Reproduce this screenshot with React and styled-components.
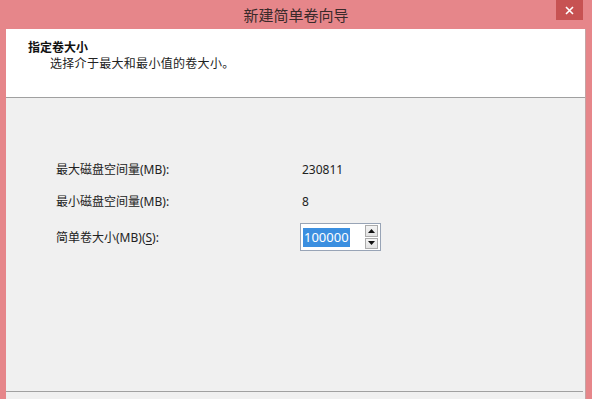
import React from "react";
import styled, { createGlobalStyle } from "styled-components";

const Global = createGlobalStyle`
  html, body { margin: 0; padding: 0; }
  body { width: 592px; height: 399px; overflow: hidden; background: #e6868a; }
  #root { height: 100%; }
`;

const FONT = `"Segoe UI", "Noto Sans", "Noto Sans CJK SC", sans-serif`;
const CJK = `"Noto Sans CJK SC", "Noto Sans", sans-serif`;

const Window = styled.div`
  width: 592px;
  height: 399px;
  box-sizing: border-box;
  display: flex;
  flex-direction: column;
  background: #e6868a;
  padding: 0 6px 0 6px;
  font-family: ${FONT};
`;

const TitleBar = styled.div`
  height: 29px;
  flex: none;
  display: flex;
  align-items: center;
  justify-content: center;
  position: relative;
  margin: 0 -6px;
`;

const Title = styled.div`
  font-family: ${CJK};
  font-size: 15px;
  color: #3a2a2a;
  line-height: 20px;
  margin-top: 1px;
`;

const CloseButton = styled.div`
  position: absolute;
  top: 0;
  right: 9px;
  width: 27px;
  height: 20px;
  background: #c75252;
  display: flex;
  align-items: center;
  justify-content: center;
`;

const Client = styled.div`
  flex: 1;
  display: flex;
  flex-direction: column;
  background: #f0f0f0;
  border-right: 1px solid #c4a4a4;
`;

const Header = styled.div`
  height: 69px;
  flex: none;
  box-sizing: border-box;
  background: #ffffff;
  border-bottom: 1px solid #a0a0a0;
  padding: 10px 0 0 22px;
  font-family: ${CJK};
`;

const HeaderTitle = styled.div`
  font-size: 12px;
  font-weight: bold;
  color: #111;
  line-height: 16px;
`;

const HeaderSub = styled.div`
  font-size: 12px;
  color: #222;
  line-height: 15px;
  padding-left: 22px;
  letter-spacing: 0.3px;
`;

const Body = styled.div`
  flex: 1;
  padding: 62px 0 0 50px;
`;

const Grid = styled.div`
  display: grid;
  grid-template-columns: 244px auto;
  grid-template-rows: 20px 20px 28px;
  row-gap: 12px;
  align-items: center;
`;

const Label = styled.div`
  font-size: 12px;
  color: #222;
  line-height: 20px;
  font-family: ${FONT};
`;

const Value = styled.div`
  font-size: 12px;
  color: #222;
  line-height: 20px;
  padding-left: 2px;
`;

const Under = styled.span`
  text-decoration: underline;
  text-underline-offset: 2px;
`;

const Spin = styled.div`
  width: 81px;
  height: 28px;
  margin-top: -2px;
  box-sizing: border-box;
  border: 1px solid #98a4b6;
  background: #fff;
  display: flex;
  align-items: center;
  padding: 0 2px 0 2px;
  justify-content: space-between;
`;

const Selected = styled.span`
  background: #3b8fe0;
  color: #fff;
  font-size: 13px;
  line-height: 19px;
  height: 19px;
  padding: 0 1px;
  font-family: ${FONT};
`;

const Arrows = styled.div`
  display: flex;
  flex-direction: column;
  width: 13px;
  height: 24px;
  gap: 1px;
`;

const ArrowBtn = styled.div`
  flex: 1;
  box-sizing: border-box;
  border: 1px solid #acacac;
  background: linear-gradient(#f4f4f4, #e2e2e2);
  display: flex;
  align-items: center;
  justify-content: center;
`;

const Bottom = styled.div`
  height: 7px;
  flex: none;
  border-top: 1px solid #a0a0a0;
  margin-right: 2px;
`;

const Tri = ({ up }) => (
  <svg width="7" height="4" viewBox="0 0 7 4">
    <polygon points={up ? "0,4 7,4 3.5,0" : "0,0 7,0 3.5,4"} fill="#111" />
  </svg>
);

export default function App() {
  return (
    <>
      <Global />
      <Window>
        <TitleBar>
          <Title>新建简单卷向导</Title>
          <CloseButton>
            <svg width="9" height="9" viewBox="0 0 9 9">
              <path d="M1 1 L8 8 M8 1 L1 8" stroke="#fff" strokeWidth="1.6" />
            </svg>
          </CloseButton>
        </TitleBar>
        <Client>
          <Header>
            <HeaderTitle>指定卷大小</HeaderTitle>
            <HeaderSub>选择介于最大和最小值的卷大小。</HeaderSub>
          </Header>
          <Body>
            <Grid>
              <Label>最大磁盘空间量(MB):</Label>
              <Value>230811</Value>
              <Label>最小磁盘空间量(MB):</Label>
              <Value>8</Value>
              <Label>
                简单卷大小(MB)(<Under>S</Under>):
              </Label>
              <Spin>
                <Selected>100000</Selected>
                <Arrows>
                  <ArrowBtn>
                    <Tri up />
                  </ArrowBtn>
                  <ArrowBtn>
                    <Tri />
                  </ArrowBtn>
                </Arrows>
              </Spin>
            </Grid>
          </Body>
          <Bottom />
        </Client>
      </Window>
    </>
  );
}
